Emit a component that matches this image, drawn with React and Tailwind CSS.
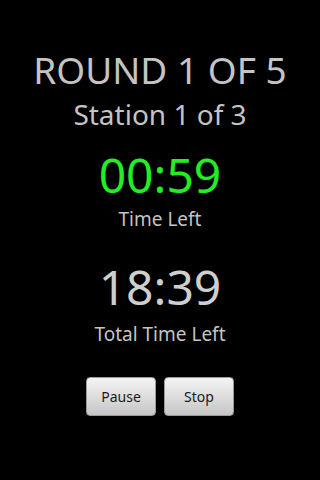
import React from 'react';

const font = { fontFamily: '"Noto Sans", "Open Sans", sans-serif' };

const Btn = ({ label }) => (
  <button className="w-[70px] h-[39px] rounded-[4px] border border-[#9a9a9a] bg-gradient-to-b from-[#f4f4f4] to-[#c6c6c6] text-[14px] text-[#1a1a1a]">
    {label}
  </button>
);

export default function App() {
  return (
    <div className="w-[320px] h-[480px] bg-black flex flex-col items-center text-[#c4c4c4]" style={font}>
      <div className="mt-[48px] h-[44px] leading-[44px] text-[37px]">ROUND 1 OF 5</div>
      <div className="mt-[5px] h-[34px] leading-[34px] text-[28px]">Station 1 of 3</div>
      <div className="mt-[16px] h-[56px] leading-[56px] text-[48px] text-[#22ee22]">00:59</div>
      <div className="mt-[4px] h-[24px] leading-[24px] text-[19px]">Time Left</div>
      <div className="mt-[28px] h-[56px] leading-[56px] text-[48px] text-[#cfcfcf]">18:39</div>
      <div className="mt-[7px] h-[24px] leading-[24px] text-[19px]">Total Time Left</div>
      <div className="mt-[31px] flex gap-[8px]">
        <Btn label="Pause" />
        <Btn label="Stop" />
      </div>
    </div>
  );
}
